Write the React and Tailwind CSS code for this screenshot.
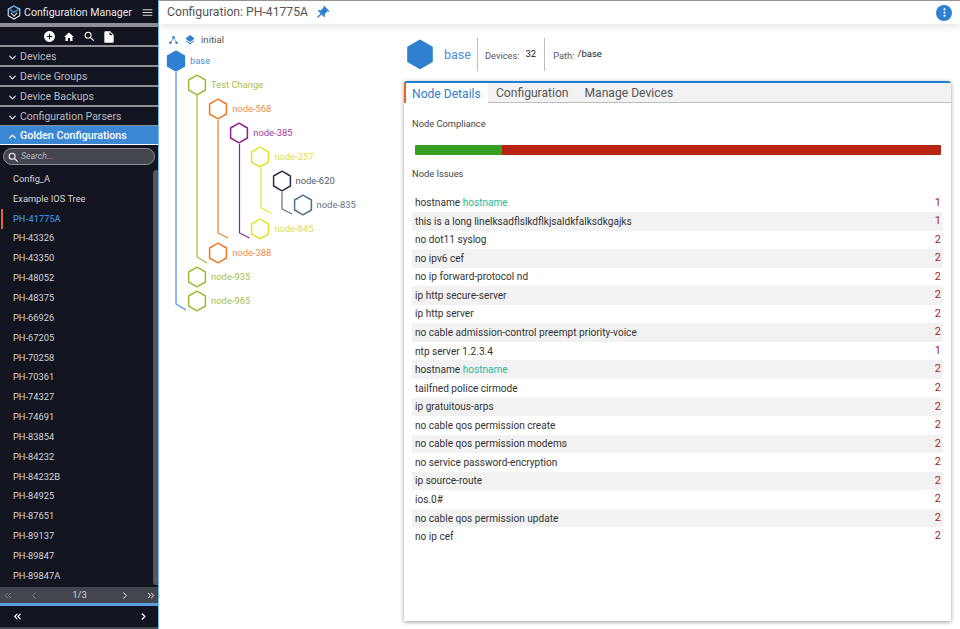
import { ChevronDown, ChevronUp, ChevronLeft, ChevronRight, ChevronsLeft, ChevronsRight } from 'lucide-react';
import { MdAddCircle, MdHome, MdSearch, MdInsertDriveFile, MdMenu, MdPushPin, MdLayers, MdMoreVert } from 'react-icons/md';

const sections = ['Devices', 'Device Groups', 'Device Backups', 'Configuration Parsers'];

const configs = [
  'Config_A', 'Example IOS Tree', 'PH-41775A', 'PH-43326', 'PH-43350', 'PH-48052', 'PH-48375',
  'PH-66926', 'PH-67205', 'PH-70258', 'PH-70361', 'PH-74327', 'PH-74691', 'PH-83854', 'PH-84232',
  'PH-84232B', 'PH-84925', 'PH-87651', 'PH-89137', 'PH-89847', 'PH-89847A',
];

const nodes = [
  { name: 'base', depth: 0, color: '#2f80d0', text: 'text-[#4a90d9]', solid: true },
  { name: 'Test Change', depth: 1, color: '#a3b83a', text: 'text-[#a9bd4e]' },
  { name: 'node-568', depth: 2, color: '#ec7a26', text: 'text-[#ee8a48]' },
  { name: 'node-385', depth: 3, color: '#8e1f8e', text: 'text-[#a5379f]' },
  { name: 'node-257', depth: 4, color: '#e3e32b', text: 'text-[#e0e04a]' },
  { name: 'node-620', depth: 5, color: '#2a2f4d', text: 'text-[#55586a]' },
  { name: 'node-835', depth: 6, color: '#51708a', text: 'text-[#5f7488]' },
  { name: 'node-645', depth: 4, color: '#e3e32b', text: 'text-[#e0e04a]' },
  { name: 'node-388', depth: 2, color: '#ec7a26', text: 'text-[#ee8a48]' },
  { name: 'node-935', depth: 1, color: '#a3b83a', text: 'text-[#a9bd4e]' },
  { name: 'node-965', depth: 1, color: '#a3b83a', text: 'text-[#a9bd4e]' },
];

const issues = [
  ['hostname', 'hostname', 1],
  ['this is a long linelksadflslkdflkjsaldkfalksdkgajks', '', 1],
  ['no dot11 syslog', '', 2],
  ['no ipv6 cef', '', 2],
  ['no ip forward-protocol nd', '', 2],
  ['ip http secure-server', '', 2],
  ['ip http server', '', 2],
  ['no cable admission-control preempt priority-voice', '', 2],
  ['ntp server 1.2.3.4', '', 1],
  ['hostname', 'hostname', 2],
  ['tailfned police cirmode', '', 2],
  ['ip gratuitous-arps', '', 2],
  ['no cable qos permission create', '', 2],
  ['no cable qos permission modems', '', 2],
  ['no service password-encryption', '', 2],
  ['ip source-route', '', 2],
  ['ios.0#', '', 2],
  ['no cable qos permission update', '', 2],
  ['no ip cef', '', 2],
];

function Hexagon({ color, solid, size = 20 }) {
  return (
    <svg width={size} height={size * 1.1} viewBox="0 0 20 22" className="shrink-0">
      <path d="M10 1.2 18.4 6v10L10 20.8 1.6 16V6z" fill={solid ? color : 'white'} stroke={color} strokeWidth="1.5" strokeLinejoin="round" />
    </svg>
  );
}

function Logo() {
  return (
    <svg width="14" height="15" viewBox="0 0 16 17" fill="none" className="shrink-0">
      <path d="M8 1 14.6 4.6v7.6L8 16 1.4 12.2V4.6z" stroke="#e8edf2" strokeWidth="1.2" />
      <path d="M3 5.2 8 8.2l5-3" stroke="#3d8fd8" strokeWidth="1.8" />
      <path d="M8 1 3 4.6M8 1l5 3.6" stroke="#3d8fd8" strokeWidth="1.3" />
      <path d="M4.5 9 8 12.8 11.5 9" stroke="#e8edf2" strokeWidth="1.2" />
    </svg>
  );
}

function Sidebar() {
  return (
    <aside className="w-[159px] h-[629px] shrink-0 bg-[#8f9095] border-r border-[#7ab8f0] flex flex-col">
      <div className="h-[23px] pt-[2px] bg-[#12141f] flex items-center pl-[7px] pr-[4px] text-[10.6px] text-[#e6e7ea]">
        <Logo />
        <span className="ml-[3px] whitespace-nowrap">Configuration Manager</span>
        <MdMenu className="ml-auto text-[#d8d9dc] text-[13px]" />
      </div>
      <div className="h-[18.5px] pt-[2px] mt-[3.5px] bg-[#12141f] flex items-center justify-center text-white">
        <div className="w-[20px] flex justify-center"><MdAddCircle className="text-[13px]" /></div>
        <div className="w-[20px] flex justify-center"><MdHome className="text-[12px]" /></div>
        <div className="w-[20px] flex justify-center"><MdSearch className="text-[13px]" /></div>
        <div className="w-[20px] flex justify-center"><MdInsertDriveFile className="text-[14px]" /></div>
      </div>
      <div className="flex flex-col">
        {sections.map((s) => (
          <div key={s} className="h-[18px] pt-[2px] mt-[2px] bg-[#12141f] flex items-center pl-[7px] text-[10.5px] text-[#b9bac0]">
            <ChevronDown size={11} strokeWidth={3} className="text-[#d8d9dc] mr-[2px] shrink-0" />
            {s}
          </div>
        ))}
      </div>
      <div className="h-[18px] pt-[2px] mt-[1px] bg-[#3a87d4] flex items-center pl-[7px] text-[10.7px] font-medium text-white">
        <ChevronUp size={11} strokeWidth={3} className="mr-[2px] shrink-0" />
        Golden Configurations
      </div>
      <div className="h-[1px] bg-white" />
      <div className="flex-1 flex flex-col min-h-0 bg-[#12141f]">
        <div className="pt-[3px] px-[3px]">
          <div className="h-[17px] pt-[1px] rounded-full bg-[#43454f] border border-[#8f9095] flex items-center pl-[3px] text-[8.7px] italic text-[#b9bac0]">
            <MdSearch className="text-white text-[13px] mr-[1px]" />
            Search...
          </div>
        </div>
        <div className="relative mt-[4px] flex-1">
          <div className="absolute right-0 top-[1px] bottom-[2px] w-[5px] rounded-l-[3px] bg-[#555660]" />
          {configs.map((c) => {
            const active = c === 'PH-41775A';
            return (
              <div key={c} className={active ? 'h-[19.85px] flex items-center ml-[1px] pl-[10px] border-l-2 border-[#e8622c] text-[9.2px] text-[#3a87d4] font-medium' : 'h-[19.85px] flex items-center pl-[13px] text-[9.3px] text-[#d3d4d8]'}>
                {c}
              </div>
            );
          })}
        </div>
        <div className="h-[16px] pt-[1px] bg-[#43454f] flex items-center pl-[2px] text-[9.5px] text-[#d3d4d8]">
          <ChevronsLeft size={11} className="w-[12px] text-[#80828c]" />
          <ChevronLeft size={11} className="w-[12px] ml-[14px] text-[#80828c]" />
          <span className="w-[20px] ml-[29.5px] text-center">1/3</span>
          <ChevronRight size={11} className="w-[12px] ml-[29px] text-white" />
          <ChevronsRight size={11} className="w-[12px] ml-[14px] text-white" />
        </div>
      </div>
      <div className="h-[3px] bg-[#5a9ee0]" />
      <div className="h-[21px] bg-[#12141f] flex items-center justify-between pl-[12px] pr-[9px] text-white">
        <ChevronsLeft size={11} strokeWidth={2.5} />
        <ChevronRight size={11} strokeWidth={2.5} />
      </div>
      <div className="h-[2px] bg-[#43454f]" />
    </aside>
  );
}

function Tree() {
  return (
    <div className="relative w-[245px] shrink-0">
      <div className="flex items-center h-[16px] mt-[8px] ml-[9.5px] text-[9.6px] text-[#555]">
        <svg width="9" height="10" viewBox="0 0 10 10" fill="#2f80d0">
          <circle cx="5" cy="2" r="1.4" />
          <circle cx="1.6" cy="8" r="1.4" />
          <circle cx="8.4" cy="8" r="1.4" />
          <path d="M5 2 1.6 8M5 2l3.4 6" stroke="#2f80d0" strokeWidth=".8" />
        </svg>
        <MdLayers className="text-[#2f80d0] text-[12px] ml-[6.5px]" />
        <span className="ml-[5px]">initial</span>
      </div>
      {/* connector lines between the nodes */}
      <svg className="absolute -left-[1px] top-0" width="240" height="320" fill="none" strokeWidth="1.2">
        <path d="M18 48V280l10 6" stroke="#4a90d9" />
        <path d="M39 70V233l10 6" stroke="#a3b83a" />
        <path d="M60 96V209l10 5" stroke="#ec7a26" />
        <path d="M81.5 120V209l10 5" stroke="#8e1f8e" />
        <path d="M103 144V184l10 5" stroke="#e3e32b" />
        <path d="M124 168V185l10 5" stroke="#666a7a" />
      </svg>
      <div className="relative mt-[1px] flex flex-col">
        {nodes.map((n) => (
          <div key={n.name} className="h-[24px] flex items-center text-[9.4px]" style={{ paddingLeft: 7 + n.depth * 21.1 }}>
            <Hexagon color={n.color} solid={n.solid} />
            <span className={`ml-[4px] ${n.text}`}>{n.name}</span>
          </div>
        ))}
      </div>
    </div>
  );
}

function Details() {
  return (
    <div className="flex-1 min-w-0 pt-[12px] pr-[9px] flex flex-col">
      <div className="h-[36px] flex items-center ml-[2px]">
        <Hexagon color="#2f80d0" solid size={28} />
        <span className="ml-[10px] mt-[2px] text-[12.5px] text-[#4a90d9]">base</span>
        <div className="ml-[6px] w-px h-[33px] bg-[#bdbdbd]" />
        <span className="ml-[7px] mt-[4px] text-[9.3px] text-[#555]">Devices:</span>
        <span className="ml-[6px] mt-[1px] text-[9.5px] text-[#222]">32</span>
        <div className="ml-[8px] w-px h-[33px] bg-[#bdbdbd]" />
        <span className="ml-[8px] mt-[4px] text-[9.3px] text-[#555]">Path:</span>
        <span className="ml-[3px] mt-[1px] text-[9.5px] text-[#222]">/base</span>
      </div>
      <div className="mt-[9px] h-[540px] bg-white border-t-2 border-[#1f7fd0] rounded-t-[3px] shadow-[0_1px_4px_rgba(0,0,0,0.4)] flex flex-col">
        <div className="h-[19.5px] bg-[#f2f2f2] border-b border-[#bdbdbd] flex items-stretch text-[12.1px] text-[#555]">
          <div className="w-[84px] -mb-px pt-[2px] bg-white border-l-2 border-[#e8622c] pl-[6px] flex items-center text-[#2f80d0]">Node Details</div>
          <div className="ml-[8px] pt-[2px] flex items-center">Configuration</div>
          <div className="ml-[16px] pt-[2px] flex items-center">Manage Devices</div>
        </div>
        <div className="pl-[8px] pr-[8px] flex flex-col">
          <div className="mt-[15px] text-[9.3px] text-[#444] leading-[12px]">Node Compliance</div>
          <div className="mt-[15px] ml-[3px] mr-[2px] h-[10px] flex rounded-[1px] overflow-hidden">
            <div className="w-[87px] bg-[#35a021]" />
            <div className="flex-1 bg-[#b82314]" />
          </div>
          <div className="mt-[13px] text-[9.3px] text-[#444] leading-[12px]">Node Issues</div>
          <div className="mt-[14px] flex flex-col text-[10.1px] text-[#333]">
            {issues.map(([text, accent, count], i) => (
              <div key={i} className={`h-[18.56px] flex items-center justify-between pl-[3px] pr-[2px] ${i % 2 === 1 ? 'bg-[#f2f2f2]' : ''}`}>
                <span>
                  {text}
                  {accent && <span className="text-[#2bb99c]"> {accent}</span>}
                </span>
                <span className="text-[#a8261b] text-[11px]">{count}</span>
              </div>
            ))}
          </div>
        </div>
      </div>
    </div>
  );
}

export default function App() {
  return (
    <div className="w-[960px] h-[629px] flex overflow-hidden bg-white font-['Roboto',sans-serif]">
      <Sidebar />
      <main className="flex-1 min-w-0 flex flex-col border-t border-[#999]">
        <header className="h-[23px] shrink-0 bg-white flex items-center pl-[8px] pr-[8px] text-[12.2px] text-[#555] shadow-[0_2px_8px_rgba(0,0,0,0.12)] relative">
          Configuration: PH-41775A
          <MdPushPin className="ml-[6px] text-[16px] text-[#2f80d0] rotate-45" />
          <div className="ml-auto w-[16px] h-[16px] rounded-full bg-[#2f80d0] flex items-center justify-center">
            <MdMoreVert className="text-white text-[13px]" />
          </div>
        </header>
        <div className="flex-1 min-h-0 flex">
          <Tree />
          <Details />
        </div>
      </main>
    </div>
  );
}
